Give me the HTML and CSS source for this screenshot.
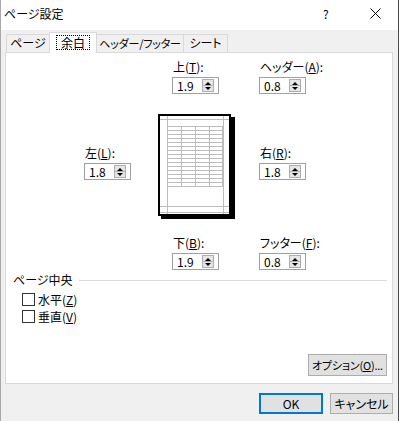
FILE: index.html
```html
<!DOCTYPE html>
<html lang="ja">
<head>
  <meta charset="UTF-8" />
  <title>ページ設定</title>
  <link rel="stylesheet" href="styles.css">
</head>
<body>
  <div class="dialog">
    <div class="titlebar">
      <span class="title">ページ設定</span>
      <span class="help">?</span>
      <svg class="close" width="11" height="11" viewBox="0 0 11 11">
        <path d="M0.5 0.5 L10.5 10.5 M10.5 0.5 L0.5 10.5" stroke="#000" stroke-width="1" fill="none"/>
      </svg>
    </div>

    <div class="body">
      <div class="tabs">
        <div class="tab tab-page">ページ</div>
        <div class="tab tab-margin active"><span class="focus">余白</span></div>
        <div class="tab tab-header">ヘッダー/フッター</div>
        <div class="tab tab-sheet">シート</div>
      </div>

      <div class="panel">
        <div class="row row-top">
          <div class="field field-mid">
            <div class="label">上(<u>T</u>):</div>
            <div class="spin"><span class="value">1.9</span><span class="arrows"></span></div>
          </div>
          <div class="field">
            <div class="label">ヘッダー(<u>A</u>):</div>
            <div class="spin"><span class="value">0.8</span><span class="arrows"></span></div>
          </div>
        </div>

        <div class="row row-mid">
          <div class="field field-side">
            <div class="label">左(<u>L</u>):</div>
            <div class="spin"><span class="value">1.8</span><span class="arrows"></span></div>
          </div>
          <div class="preview">
            <svg width="80" height="108" viewBox="0 0 80 108">
              <rect x="5" y="5" width="74" height="102" fill="#000"/>
              <rect x="3" y="3" width="71" height="100" fill="#fff" stroke="#000" stroke-width="2"/>
              <g stroke="#bdbdbd" stroke-width="1" fill="none">
                <path d="M11.5 4 V102 M67.5 4 V102 M4 7.5 H73 M4 94.5 H73 M4 100.5 H73"/>
                <path d="M25.5 14 V74 M39.5 14 V74 M53.5 14 V74"/>
                <path d="M11 14.5 H68 M11 18.5 H68 M11 22.5 H68 M11 26.5 H68 M11 30.5 H68 M11 34.5 H68 M11 38.5 H68 M11 42.5 H68 M11 46.5 H68 M11 50.5 H68 M11 54.5 H68 M11 58.5 H68 M11 62.5 H68 M11 66.5 H68 M11 70.5 H68 M11 74.5 H68"/>
                <path d="M66.5 14 V75"/>
              </g>
            </svg>
          </div>
          <div class="field field-side">
            <div class="label">右(<u>R</u>):</div>
            <div class="spin"><span class="value">1.8</span><span class="arrows"></span></div>
          </div>
        </div>

        <div class="row row-bottom">
          <div class="field field-mid">
            <div class="label">下(<u>B</u>):</div>
            <div class="spin"><span class="value">1.9</span><span class="arrows"></span></div>
          </div>
          <div class="field">
            <div class="label">フッター(<u>F</u>):</div>
            <div class="spin"><span class="value">0.8</span><span class="arrows"></span></div>
          </div>
        </div>

        <div class="group-head">
          <span>ページ中央</span>
          <span class="rule"></span>
        </div>
        <label class="check"><span class="box"></span>水平(<u>Z</u>)</label>
        <label class="check"><span class="box"></span>垂直(<u>V</u>)</label>

        <div class="panel-foot">
          <button class="btn btn-options">オプション(<u>O</u>)...</button>
        </div>
      </div>

      <div class="actions">
        <button class="btn btn-ok">OK</button>
        <button class="btn btn-cancel">キャンセル</button>
      </div>
    </div>
  </div>
</body>
</html>
```

FILE: styles.css
```css
* {
  margin: 0;
  padding: 0;
  box-sizing: border-box;
}

body {
  font-family: "Noto Sans CJK JP", "Noto Sans", sans-serif;
  font-size: 12px;
  font-feature-settings: "palt" 1;
  color: #000;
  background: #fff;
}

u {
  text-decoration: underline;
  text-underline-offset: 1px;
}

.dialog {
  width: 399px;
  height: 421px;
  border-left: 1px solid #a8a8a8;
  border-right: 1px solid #4a4a4a;
  background: #f0f0f0;
  display: flex;
  flex-direction: column;
}

/* title bar */
.titlebar {
  height: 30px;
  background: #fff;
  display: flex;
  align-items: center;
  padding: 0 0 3px 3px;
}

.title {
  flex: 1;
}

.help {
  width: 10px;
  margin-right: 37px;
}

.close {
  margin-right: 17px;
}

/* tabs */
.body {
  flex: 1;
  padding: 2px 5px 0 4px;
  display: flex;
  flex-direction: column;
}

.tabs {
  display: flex;
  height: 20px;
  padding-left: 1px;
  position: relative;
  z-index: 1;
}

.tab {
  margin-top: 2px;
  height: 18px;
  border: 1px solid #d9d9d9;
  border-bottom: none;
  border-right: none;
  background: #f0f0f0;
  text-align: center;
  line-height: 16px;
  white-space: nowrap;
  overflow: hidden;
}

.tab-page { width: 43px; }
.tab-margin { width: 48px; }
.tab-header { width: 86px; font-size: 11px; letter-spacing: -0.2px; }
.tab-sheet { width: 45px; border-right: 1px solid #d9d9d9; }

.tab.active {
  margin-top: 0;
  height: 21px;
  background: #fff;
  border-right: 1px solid #d9d9d9;
  padding-top: 2px;
}

.tab.active + .tab {
  border-left: none;
}

.focus {
  display: inline-block;
  outline: 1px dotted #000;
  padding: 0 4px;
  line-height: 13px;
}

/* panel */
.panel {
  height: 332px;
  background: #fff;
  border: 1px solid #d9d9d9;
  display: flex;
  flex-direction: column;
  padding-bottom: 7px;
}

.row {
  display: flex;
}

.row-top {
  padding-top: 7px;
  padding-left: 166px;
}

.row-bottom {
  margin-top: 16px;
  padding-left: 166px;
}

.row-mid {
  margin-top: 18px;
  padding-left: 78px;
}

.field-mid {
  width: 87px;
}

.field-side {
  width: 72px;
  margin-top: 34px;
}

.preview {
  width: 103px;
  height: 108px;
}

.preview svg {
  display: block;
}

.label {
  line-height: 14px;
  height: 14px;
  padding-left: 1px;
  white-space: nowrap;
}

.spin {
  margin-top: 3px;
  width: 47px;
  height: 17px;
  border: 1px solid #a0a0a0;
  display: flex;
  align-items: center;
  justify-content: space-between;
  padding: 0 4px 0 4px;
  line-height: 15px;
}

.arrows {
  width: 12px;
  height: 13px;
  border: 1px solid #adadad;
  background:
    linear-gradient(#adadad, #adadad) center / 100% 1px no-repeat,
    #e6e6e6;
  position: relative;
}

.arrows::before,
.arrows::after {
  content: '';
  position: absolute;
  left: 2px;
  border-left: 3px solid transparent;
  border-right: 3px solid transparent;
}

.arrows::before {
  top: 2px;
  border-bottom: 3px solid #000;
}

.arrows::after {
  bottom: 1px;
  border-top: 3px solid #000;
}

/* center group */
.group-head {
  display: flex;
  align-items: center;
  margin-top: 3px;
  padding: 0 5px 0 7px;
  line-height: 14px;
}

.rule {
  flex: 1;
  height: 1px;
  background: #dcdcdc;
  margin: 1px 0 0 6px;
}

.check {
  display: flex;
  align-items: center;
  height: 17px;
  padding-left: 16px;
}

.check:first-of-type {
  margin-top: 4px;
}

.box {
  width: 13px;
  height: 13px;
  border: 1px solid #333;
  background: #fff;
  margin-right: 3px;
}

.panel-foot {
  margin-top: auto;
  display: flex;
  justify-content: flex-end;
  padding-right: 5px;
}

/* buttons */
.btn {
  font: inherit;
  font-feature-settings: "palt" 1;
  height: 22px;
  background: #e1e1e1;
  border: 1px solid #adadad;
  color: #000;
  white-space: nowrap;
  padding: 0;
}

.btn-options {
  width: 79px;
  font-size: 11px;
  letter-spacing: -0.2px;
}

.actions {
  display: flex;
  justify-content: flex-end;
  gap: 7px;
  margin-top: 9px;
}

.btn-ok {
  width: 64px;
  height: 21px;
  border: 2px solid #0078d7;
}

.btn-cancel {
  width: 63px;
  height: 21px;
}
```
